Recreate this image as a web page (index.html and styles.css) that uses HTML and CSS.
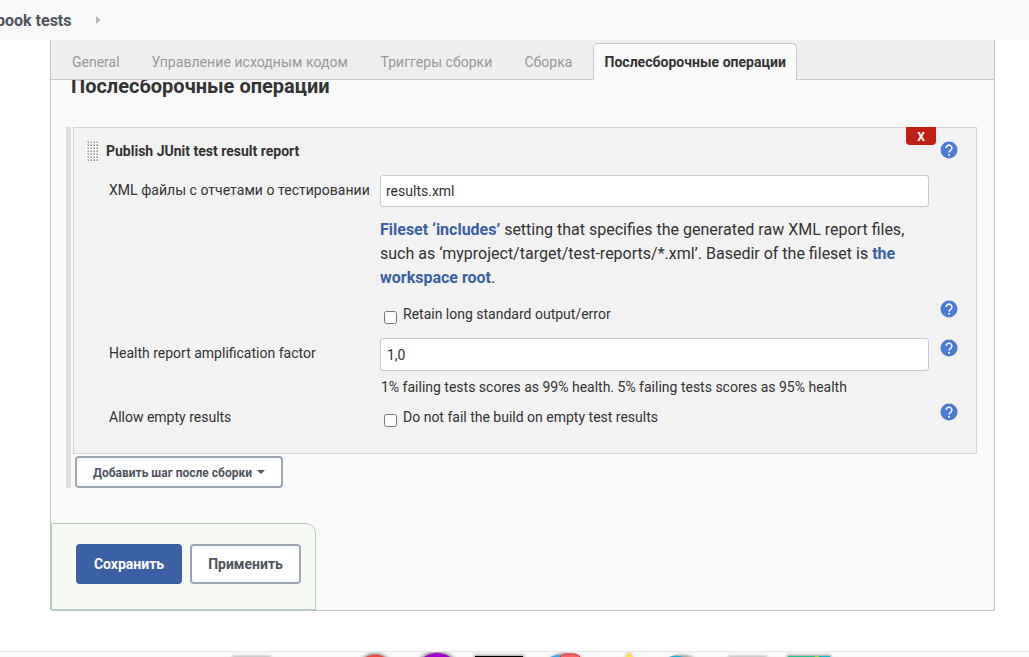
FILE: index.html
```html
<!DOCTYPE html>
<html lang="ru">
<head>
<meta charset="utf-8">
<title>Послесборочные операции</title>
<link rel="stylesheet" href="styles.css">
</head>
<body>
<svg class="defs" width="0" height="0"><symbol id="help" viewBox="-.7 -.7 25.400 25.400"><circle cx="12" cy="12" r="12" fill="#4b7ada"/><path d="M8 9.2a4 4 0 1 1 6.800 2.800c-1.500 1.400-2.700 1.800-2.700 3.700" fill="none" stroke="#fff" stroke-width="2.200"/><rect x="10.900" y="17.600" width="2.400" height="2.400" fill="#fff"/></symbol></svg>
<header class="crumbs"><span class="crumb">book tests</span><svg class="crumb-arrow" width="5" height="8" viewBox="0 0 5 8"><path d="M0 0L4.500 4L0 8z" fill="#b5b5b5"/></svg></header>
<main class="panel">
  <nav class="tabs">
    <a class="tab general">General</a><a class="tab source">Управление исходным кодом</a><a class="tab triggers">Триггеры сборки</a><a class="tab build">Сборка</a><a class="tab active">Послесборочные операции</a>
  </nav>
  <section class="content">
    <h2 class="heading">Послесборочные операции</h2>
    <div class="steps">
      <div class="step">
        <div class="row title-row">
          <div class="title"><svg class="grip" width="12" height="21"><defs><pattern id="dots" width="3" height="3" patternUnits="userSpaceOnUse"><rect width="3" height="3" fill="#fff"/><rect x="1" y="0" width="2" height="2" fill="#c9c9c4"/><rect x="2" y="1" width="1" height="1" fill="#95958f"/></pattern></defs><rect width="12" height="21" fill="url(#dots)"/></svg><b>Publish JUnit test result report</b></div>
          <button class="delete">X</button>
          <svg class="help"><use href="#help"/></svg>
        </div>
        <div class="row files-row"><label class="label">XML файлы с отчетами о тестировании</label><input class="field" value="results.xml"></div>
        <div class="row desc-row"><p class="desc"><b>Fileset ‘includes’</b> setting that specifies the generated raw XML report files, such as ‘myproject/target/test-reports/*.xml’. Basedir of the fileset is <b>the workspace root</b>.</p></div>
        <div class="row retain-row"><label class="check"><input type="checkbox"><span>Retain long standard output/error</span></label><svg class="help"><use href="#help"/></svg></div>
        <div class="row factor-row"><label class="label">Health report amplification factor</label><input class="field factor" value="1,0"><svg class="help"><use href="#help"/></svg></div>
        <div class="row hint-row"><span class="hint">1% failing tests scores as 99% health. 5% failing tests scores as 95% health</span></div>
        <div class="row empty-row"><label class="label">Allow empty results</label><label class="check"><input type="checkbox"><span>Do not fail the build on empty test results</span></label><svg class="help"><use href="#help"/></svg></div>
      </div>
      <button class="add"><span>Добавить шаг после сборки</span><i class="caret"></i></button>
    </div>
    <div class="actions"><button class="btn save">Сохранить</button><button class="btn apply">Применить</button></div>
  </section>
</main>
<footer class="dock">
  <svg width="1029" height="5" viewBox="0 652 1029 5">
    <defs><filter id="soft" x="-30%" y="-30%" width="160%" height="160%"><feGaussianBlur stdDeviation="1.8"/></filter></defs>
    <g filter="url(#soft)" fill="#777" opacity=".75"><rect x="232" y="656" width="39" height="20" opacity=".7"/><circle cx="375" cy="672" r="19"/><circle cx="437" cy="675" r="24"/><rect x="474" y="655" width="50" height="20"/><ellipse cx="566" cy="669" rx="22" ry="16"/><path d="M616 674L629 652L642 674z"/><ellipse cx="682" cy="671" rx="20" ry="16"/><rect x="728" y="656" width="39" height="20" opacity=".7"/><rect x="787" y="655" width="44" height="20"/></g>
    <circle cx="375" cy="673" r="18.500" fill="#ea4a3c"/><circle cx="437" cy="676" r="23" fill="#a000d0"/><rect x="475" y="656" width="48" height="8"/><ellipse cx="559" cy="670" rx="17" ry="15" fill="#38a8ec"/><rect x="559" y="654" width="22" height="12" rx="7" fill="#ff6464" stroke="#e22f38"/><path d="M623 660L629 652L635 660z" fill="#fbe64b"/><ellipse cx="676" cy="667" rx="14" ry="11.500" fill="#18afd5"/><rect x="788" y="656" width="27" height="8" fill="#25c68a"/><rect x="815" y="656" width="4" height="8" fill="#a2d33c"/><rect x="819" y="656" width="11" height="8" fill="#08bdd0"/>
  </svg>
</footer>
</body>
</html>
```
FILE: styles.css
```css
* { box-sizing: border-box; }
body { margin: 0; height: 657px; overflow: hidden; display: flex; flex-direction: column; background: #fff; color: #333; font: 14px/20px Roboto, "Noto Sans", sans-serif; }
.defs { position: absolute; }
button, input { font-family: inherit; }
.crumbs { height: 40px; flex: none; display: flex; align-items: center; background: #f8f8f8; }
.crumb { width: 71.500px; padding-top: 2px; display: flex; justify-content: flex-end; white-space: nowrap; font-size: 16px; font-weight: 700; color: #4d545d; }
.crumb-arrow { margin-left: 24.500px; }
.panel { width: 945px; height: 571px; flex: none; margin-left: 50px; display: flex; flex-direction: column; border: 1px solid #c4c4c4; border-top: 0; border-radius: 0 0 3px 3px; background: #f9f9f9; }
.tabs { height: 40px; flex: none; display: flex; align-items: flex-end; background: #eee; box-shadow: inset 0 -1px #c8c8c8; padding-left: 21px; }
.tab { height: 37px; line-height: 38px; color: #999; white-space: nowrap; }
.general { width: 79.500px; }
.source { width: 229px; letter-spacing: .06px; }
.triggers { width: 144px; letter-spacing: .03px; }
.build { width: 68.500px; }
.tab.active { width: 204px; padding-left: 10.500px; line-height: 36px; letter-spacing: .02px; font-weight: 700; color: #333; background: #f9f9f9; border: 1px solid #c8c8c8; border-bottom: 0; border-radius: 5px 5px 0 0; }
.content { flex: 1; display: flex; flex-direction: column; align-items: flex-start; overflow: hidden; }
.heading { height: 24px; flex: none; margin: -6px 0 29px 20px; font-size: 20px; line-height: 24px; font-weight: 700; }
.steps { width: 911px; height: 361px; flex: none; margin-left: 15px; padding-left: 2px; border-left: 5px solid #ddd; }
.step { width: 904px; height: 327px; border: 1px solid #d6d6d6; background: #f2f2f2; }
.row { display: grid; grid-template-columns: 271px 549px 12px 16px; margin-left: 35px; align-items: start; }
.help { grid-column: 4; grid-row: 1; width: 18px; height: 18px; margin-left: -1px; }
.title-row { height: 47px; }
.title { grid-column: 1; display: flex; align-items: center; margin: 12px 0 0 -23px; height: 22px; gap: 8px; white-space: nowrap; }
.title b { line-height: 20px; margin-top: -1px; }
.delete { grid-column: 2; justify-self: end; width: 30px; height: 18px; margin: -1px -7px 0 0; padding: 2px 0 0; border: 0; border-radius: 0 0 4px 4px; background: #bf2016; color: #fff; font-size: 12px; font-weight: 700; }
.title-row .help { margin-top: 13px; }
.label { grid-column: 1; white-space: nowrap; }
.field { grid-column: 2; width: 549px; height: 32px; padding: 0 5px; border: 1px solid #c9c9c9; border-radius: 3px; background: #fff; color: #333; font-size: 14px; }
.files-row { height: 42px; }
.files-row .label { margin-top: 5px; letter-spacing: .03px; }
.desc-row { height: 83px; }
.desc { grid-column: 2; margin: 1px 0 0; font-size: 16px; line-height: 24px; }
.desc b { color: #3b60a3; }
.retain-row { height: 38px; }
.check { grid-column: 2; grid-row: 1; display: flex; margin-left: 4px; gap: 6px; padding-top: 4px; }
.check input { width: 13px; height: 13px; margin: 7px 0 0; }
.retain-row .help { margin-top: 0; }
.factor-row { height: 38px; }
.field.factor { height: 33px; padding-left: 6px; }
.factor-row .label { margin-top: 5px; }
.factor-row .help { margin-top: 1px; }
.hint-row { height: 27px; }
.hint { grid-column: 2; margin: 1px 0 0 1px; }
.empty-row .label { margin-top: 4px; }
.empty-row .help { margin-top: 0; }
.add { width: 208px; height: 32px; margin: 2px 0 0 2px; padding: 1px 0 0 16px; display: flex; align-items: center; gap: 5px; border: 2px solid #9ba6b2; border-radius: 4px; background: #fff; color: #4d545d; font-size: 12px; font-weight: 700; white-space: nowrap; }
.caret { margin-top: -2px; border: 4px solid transparent; border-top-color: currentColor; border-bottom: 0; }
.actions { width: 265px; height: 87px; flex: none; margin-top: auto; padding: 20px 0 0 24px; display: flex; gap: 8px; border: 1px solid #b2cdb8; border-radius: 0 10px 0 0; background: #f6f9f2; }
.btn { height: 40px; padding: 0; border-radius: 4px; font-size: 14px; font-weight: 700; }
.save { width: 106px; border: 0; background: #3b60a3; color: #fff; }
.apply { width: 111px; border: 2px solid #9ba6b2; background: #fff; color: #4d545d; }
.dock { height: 6px; margin-top: auto; border-top: 1px solid #e9e9e9; background: #f8f8f8; }
.dock svg { display: block; }
```
